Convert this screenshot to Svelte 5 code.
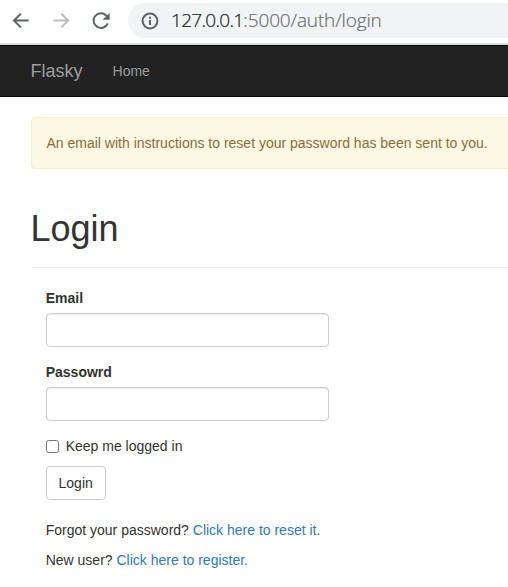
<script>
  let email = $state('');
  let password = $state('');
  let remember = $state(false);
</script>

<div class="page">
  <header class="toolbar">
    <svg class="icon back" width="18" height="18" viewBox="0 0 18 18"><path d="M16.6 8.6H2M8.8 1.8 2 8.6l6.8 6.8" /></svg>
    <svg class="icon forward" width="18" height="18" viewBox="0 0 18 18"><path d="M.5 8.6h14.6M8.3 1.8l6.8 6.8-6.8 6.8" /></svg>
    <svg class="icon reload" width="18" height="18" viewBox="0 0 18 18">
      <path d="M15.7 11.3A7.3 7.3 0 1 1 14.1 3.5L15.8 5.2" />
      <path class="solid" d="M17.6.9v6.9h-6.9z" />
    </svg>
    <div class="address">
      <svg class="icon info" width="18" height="18" viewBox="0 0 18 18">
        <circle cx="9" cy="9" r="7.4" />
        <path d="M9 8v5M9 4.7v2" />
      </svg>
      <span class="url"><span class="host">127.0.0.1</span>:5000/auth/login</span>
    </div>
  </header>

  <nav class="navbar">
    <a class="brand" href="#home">Flasky</a>
    <a class="nav-link" href="#home">Home</a>
  </nav>

  <main>
    <div class="alert">An email with instructions to reset your password has been sent to you.</div>
    <div class="page-header"><h1>Login</h1></div>
    <div class="column">
      <form onsubmit={(e) => e.preventDefault()}>
        <div class="group">
          <label class="title" for="email">Email</label>
          <input class="control" id="email" type="text" bind:value={email} />
        </div>
        <div class="group">
          <label class="title" for="password">Passowrd</label>
          <input class="control" id="password" type="password" bind:value={password} />
        </div>
        <label class="check"><input type="checkbox" bind:checked={remember} />Keep me logged in</label>
        <button type="submit">Login</button>
      </form>
      <p>Forgot your password? <a href="#reset">Click here to reset it.</a></p>
      <p>New user? <a href="#register">Click here to register.</a></p>
    </div>
  </main>
</div>

<style>
  :global(body) {
    margin: 0;
    background: #fff;
  }
  .page {
    width: 100%;
    height: 587px;
    overflow: hidden;
    box-sizing: border-box;
    color: #333;
    font: 14px/20px 'Liberation Sans', Arial, sans-serif;
  }
  .page :global(*) {
    box-sizing: border-box;
  }
  .toolbar {
    display: flex;
    height: 45px;
    padding: 3px 0 0 12px;
    border-bottom: 2px solid #dcdce2;
  }
  .icon {
    flex: none;
    margin-top: 9px;
    fill: none;
    stroke: #5f6368;
    stroke-width: 2;
  }
  .forward {
    margin-left: 23px;
    stroke: #babcbe;
  }
  .reload {
    margin-left: 21px;
  }
  .solid {
    fill: #5f6368;
    stroke: none;
  }
  .address {
    display: flex;
    flex: 1;
    height: 35px;
    margin-left: 18px;
    padding-left: 13px;
    border-radius: 18px 0 0 18px;
    background: #f1f3f4;
  }
  .url {
    margin-left: 12px;
    color: #6b6e72;
    font: 300 19px/34px 'Open Sans', 'Noto Sans', sans-serif;
    letter-spacing: -0.14px;
    -webkit-text-stroke: 0.2px;
    white-space: nowrap;
  }
  .host {
    color: #202124;
    letter-spacing: -0.7px;
  }
  .navbar {
    display: flex;
    height: 52px;
    padding-left: 30.5px;
    border: solid #080808;
    border-width: 1px 0;
    background: #222;
    line-height: 50px;
  }
  .navbar a {
    color: #9d9d9d;
    text-decoration: none;
  }
  .brand {
    font-size: 18px;
  }
  .nav-link {
    margin-left: 30px;
  }
  main {
    padding: 20px 0 0 30.5px;
  }
  .alert {
    height: 52px;
    margin-right: -20px;
    padding: 15px;
    border: 1px solid #faebcc;
    border-radius: 4px;
    background: #fcf8e3;
    color: #8a6d3b;
    white-space: nowrap;
  }
  .page-header {
    margin: 40px 0 20px;
    padding-bottom: 8px;
    border-bottom: 1px solid #eee;
  }
  h1 {
    margin: 0 0 10px;
    font-size: 36px;
    font-weight: 500;
    line-height: 39.6px;
  }
  .column {
    width: 298px;
    padding-left: 15.2px;
  }
  .group {
    margin-bottom: 15px;
  }
  .title {
    display: block;
    margin-bottom: 5px;
    font-weight: 700;
  }
  .control {
    display: block;
    width: 283px;
    height: 34px;
    padding: 6px 12px;
    border: 1px solid #ccc;
    border-radius: 4px;
    box-shadow: inset 0 1px 1px rgba(0, 0, 0, 0.075);
    font: inherit;
  }
  .check {
    display: flex;
    align-items: center;
    margin-bottom: 10px;
  }
  .check input {
    width: 13px;
    height: 13px;
    margin: 1px 7px 0 0;
  }
  button {
    display: block;
    width: 60px;
    height: 34px;
    padding: 6px 0;
    border: 1px solid #ccc;
    border-radius: 4px;
    background: #fff;
    color: #333;
    font: inherit;
  }
  form {
    margin-bottom: 20px;
  }
  p {
    margin: 0 0 10px;
    white-space: nowrap;
  }
  p a {
    color: #337ab7;
    text-decoration: none;
  }
</style>
